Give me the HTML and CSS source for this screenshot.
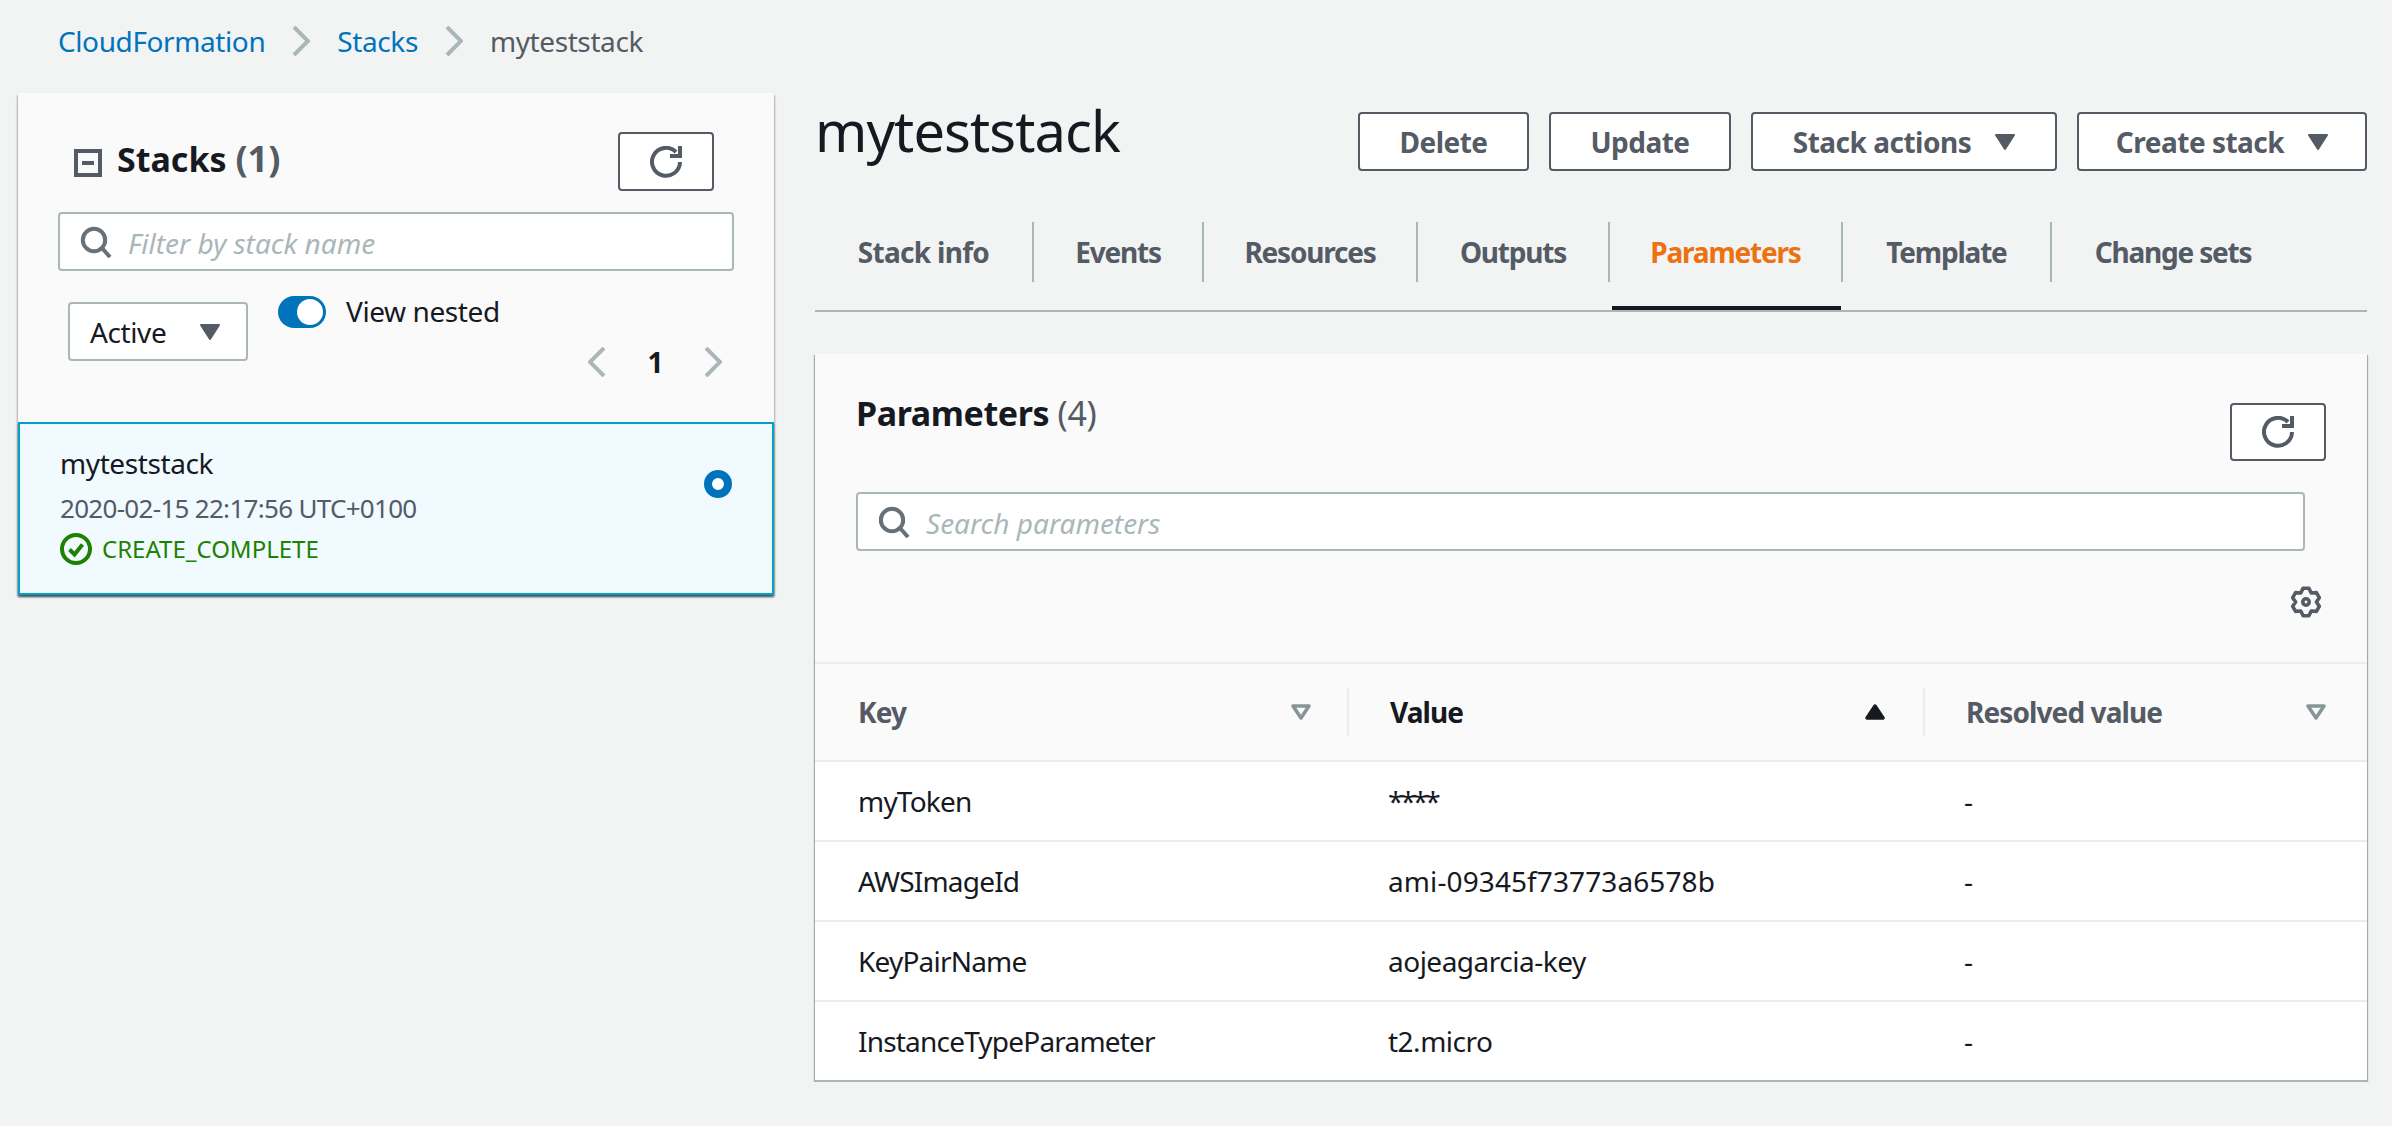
FILE: index.html
```html
<!DOCTYPE html>
<html lang="en">
<head>
  <meta charset="UTF-8" />
  <meta name="viewport" content="width=device-width, initial-scale=1" />
  <title>CloudFormation - Stacks</title>
  <link rel="stylesheet" href="styles.css">
</head>
<body>
  <nav class="breadcrumb">
    <a href="#">CloudFormation</a>
    <svg class="chevron" viewBox="0 0 18 30"><path d="M2 1l14 14L2 29"/></svg>
    <a href="#">Stacks</a>
    <svg class="chevron" viewBox="0 0 18 30"><path d="M2 1l14 14L2 29"/></svg>
    <span>myteststack</span>
  </nav>

  <div class="layout">
    <aside class="sidebar">
      <div class="sidebar-head">
        <div class="sidebar-title-row">
          <svg class="collapse-icon" viewBox="0 0 28 28"><rect x="2" y="2" width="24" height="24"/><path d="M8 14h12"/></svg>
          <h2 class="sidebar-title">Stacks <span class="count">(1)</span></h2>
          <button class="btn btn-icon sidebar-refresh">
            <svg class="icon" viewBox="0 0 16 16"><path d="M10 5h5V0"/><path d="M15 8a7 7 0 1 1-2-5"/></svg>
          </button>
        </div>

        <div class="search">
          <svg class="search-icon" viewBox="0 0 16 16"><circle cx="7" cy="7" r="5.6"/><path d="M11 11l4 4.5"/></svg>
          <span class="placeholder">Filter by stack name</span>
        </div>

        <div class="controls">
          <div class="select">
            <span>Active</span>
            <svg class="caret" viewBox="0 0 20 16"><path d="M1 1h18L10 15z"/></svg>
          </div>
          <div class="controls-right">
            <div class="toggle-row">
              <span class="toggle"></span>
              <span class="toggle-label">View nested</span>
            </div>
            <div class="pager">
              <svg class="chevron" viewBox="0 0 18 30"><path d="M16 1L2 15l14 14"/></svg>
              <strong>1</strong>
              <svg class="chevron" viewBox="0 0 18 30"><path d="M2 1l14 14L2 29"/></svg>
            </div>
          </div>
        </div>
      </div>

      <div class="stack-item">
        <div>
          <div class="stack-name">myteststack</div>
          <div class="stack-date">2020-02-15 22:17:56 UTC+0100</div>
          <div class="stack-status">
            <svg class="status-icon" viewBox="0 0 32 32"><circle cx="16" cy="16" r="14"/><path d="M9.5 16.5l5 5 8-10"/></svg>
            CREATE_COMPLETE
          </div>
        </div>
        <span class="radio"></span>
      </div>
    </aside>

    <main class="main">
      <div class="page-head">
        <h1>myteststack</h1>
        <div class="actions">
          <button class="btn btn-delete">Delete</button>
          <button class="btn btn-update">Update</button>
          <button class="btn btn-stack-actions">Stack actions <svg class="caret" viewBox="0 0 20 16"><path d="M1 1h18L10 15z"/></svg></button>
          <button class="btn btn-create">Create stack <svg class="caret" viewBox="0 0 20 16"><path d="M1 1h18L10 15z"/></svg></button>
        </div>
      </div>

      <div class="tabs">
        <a class="tab" href="#">Stack info</a>
        <a class="tab" href="#">Events</a>
        <a class="tab" href="#">Resources</a>
        <a class="tab" href="#">Outputs</a>
        <a class="tab active" href="#">Parameters</a>
        <a class="tab" href="#">Template</a>
        <a class="tab last" href="#">Change sets</a>
      </div>

      <section class="panel">
        <div class="panel-head">
          <div class="panel-title-row">
            <h2 class="panel-title">Parameters <span class="count">(4)</span></h2>
            <button class="btn btn-icon panel-refresh">
              <svg class="icon" viewBox="0 0 16 16"><path d="M10 5h5V0"/><path d="M15 8a7 7 0 1 1-2-5"/></svg>
            </button>
          </div>
          <div class="search panel-search">
            <svg class="search-icon" viewBox="0 0 16 16"><circle cx="7" cy="7" r="5.6"/><path d="M11 11l4 4.5"/></svg>
            <span class="placeholder">Search parameters</span>
          </div>
          <div class="gear-row">
            <svg class="gear" viewBox="0 0 16 16">
              <path d="M6.54 1.15h2.92L10.6 3.5l2.6-.18 1.46 2.52L13.2 8l1.46 2.16-1.46 2.52-2.6-.18-1.14 2.35H6.54L5.4 12.5l-2.6.18-1.46-2.52L2.8 8 1.34 5.84 2.8 3.32l2.6.18z"/>
              <circle cx="8" cy="8" r="1.6"/>
            </svg>
          </div>
        </div>

        <table class="params">
          <thead>
            <tr>
              <th class="col-key"><div class="th-inner">Key <svg class="sort" viewBox="0 0 20 16"><path d="M2 2h16l-8 12z"/></svg></div></th>
              <th class="col-value sorted"><div class="th-inner">Value <svg class="sort sort-active" viewBox="0 0 20 16"><path d="M10 2l8 12H2z"/></svg></div></th>
              <th class="col-resolved"><div class="th-inner">Resolved value <svg class="sort" viewBox="0 0 20 16"><path d="M2 2h16l-8 12z"/></svg></div></th>
            </tr>
          </thead>
          <tbody>
            <tr><td>myToken</td><td class="mask">****</td><td>-</td></tr>
            <tr><td>AWSImageId</td><td class="ami">ami-09345f73773a6578b</td><td>-</td></tr>
            <tr><td>KeyPairName</td><td>aojeagarcia-key</td><td>-</td></tr>
            <tr><td>InstanceTypeParameter</td><td>t2.micro</td><td>-</td></tr>
          </tbody>
        </table>
      </section>
    </main>
  </div>
</body>
</html>
```

FILE: styles.css
```css
* {
  box-sizing: border-box;
}

body {
  margin: 0;
  background: #f2f3f3;
  color: #16191f;
  font-family: "Noto Sans", "Open Sans", sans-serif;
  font-size: 28px;
  letter-spacing: -.4px;
  overflow: hidden;
}

a {
  color: inherit;
  text-decoration: none;
}

h1, h2 {
  margin: 0;
}

svg {
  flex: none;
  display: block;
}

.breadcrumb {
  height: 93px;
  padding: 0 0 12px 58px;
  display: flex;
  align-items: center;
  gap: 27px;
  color: #545b64;
}

.breadcrumb a {
  color: #0073bb;
}

.chevron {
  width: 18px;
  height: 30px;
  fill: none;
  stroke: #aab7b8;
  stroke-width: 4;
}

.layout {
  display: flex;
  padding: 0 18px;
  gap: 41px;
}

.sidebar {
  width: 756px;
  align-self: flex-start;
  background: #fafafa;
  box-shadow: 0 2px 2px 0 rgba(0, 28, 36, .3), 2px 2px 2px -1px rgba(0, 28, 36, .2), -2px 2px 2px -1px rgba(0, 28, 36, .2);
}

.sidebar-head {
  height: 329px;
  padding: 39px 40px 0 40px;
}

.sidebar-title-row {
  display: flex;
  align-items: center;
  height: 59px;
  padding-left: 16px;
}

.collapse-icon {
  width: 28px;
  height: 28px;
  margin: 3px 15px 0 0;
  fill: none;
  stroke: #545b64;
  stroke-width: 4;
}

.sidebar-title {
  font-size: 34px;
  line-height: 42px;
  margin-top: -6px;
  font-weight: 700;
  letter-spacing: 0;
}

.count {
  color: #545b64;
  font-weight: 400;
}

.sidebar-title .count {
  font-weight: 700;
  font-size: 36px;
}

.btn {
  height: 59px;
  background: #fff;
  border: 2px solid #545b64;
  border-radius: 4px;
  color: #545b64;
  font-family: inherit;
  font-size: 28px;
  font-weight: 700;
  letter-spacing: -.5px;
  padding: 0;
  display: flex;
  align-items: center;
  justify-content: center;
}

.btn-icon {
  width: 96px;
}

.sidebar-refresh {
  margin: 0 20px 0 auto;
}

.icon {
  width: 32px;
  height: 32px;
  fill: none;
  stroke: #545b64;
  stroke-width: 2;
}

.search {
  height: 59px;
  margin-top: 21px;
  background: #fff;
  border: 2px solid #aab7b8;
  border-radius: 4px;
  display: flex;
  align-items: center;
  padding-left: 20px;
}

.search-icon {
  width: 32px;
  height: 32px;
  margin-right: 16px;
  fill: none;
  stroke: #687078;
  stroke-width: 2;
}

.placeholder {
  padding-top: 2px;
  color: #aab7b8;
  font-style: italic;
  letter-spacing: 0;
}

.controls {
  display: flex;
  margin-top: 25px;
  padding-left: 10px;
  gap: 30px;
}

.select {
  width: 180px;
  height: 59px;
  margin-top: 6px;
  background: #fff;
  border: 2px solid #aab7b8;
  border-radius: 4px;
  display: flex;
  align-items: center;
  justify-content: space-between;
  padding: 0 26px 0 20px;
}

.caret {
  width: 20px;
  height: 16px;
  fill: #545b64;
  stroke: #545b64;
  stroke-width: 2;
  stroke-linejoin: round;
}

.controls-right {
  flex: 1;
}

.toggle-row {
  display: flex;
  align-items: center;
  gap: 20px;
  height: 32px;
}

.toggle-label {
  padding-bottom: 2px;
}

.toggle {
  width: 48px;
  height: 32px;
  border-radius: 16px;
  background: #0073bb;
  position: relative;
}

.toggle::after {
  content: "";
  position: absolute;
  right: 3px;
  top: 3px;
  width: 26px;
  height: 26px;
  border-radius: 50%;
  background: #fff;
}

.pager {
  display: flex;
  justify-content: flex-end;
  align-items: center;
  height: 32px;
  margin-top: 18px;
  padding-right: 12px;
  gap: 41px;
}

.pager strong {
  font-weight: 700;
}

.stack-item {
  height: 173px;
  background: #f1faff;
  border: 2px solid #00a1c9;
  padding: 19px 40px 0 40px;
  display: flex;
  justify-content: space-between;
  box-shadow: 0 2px 2px 0 rgba(0, 28, 36, .5);
}

.stack-name {
  line-height: 40px;
}

.stack-date {
  margin-top: 7px;
  font-size: 26px;
  line-height: 36px;
  letter-spacing: -.7px;
  color: #545b64;
}

.stack-status {
  margin-top: 6px;
  display: flex;
  align-items: center;
  gap: 10px;
  font-size: 24px;
  letter-spacing: 0;
  color: #1d8102;
}

.status-icon {
  width: 32px;
  height: 32px;
  fill: none;
  stroke: #1d8102;
  stroke-width: 4;
}

.radio {
  width: 28px;
  height: 28px;
  margin-top: 27px;
  border: 8px solid #0073bb;
  border-radius: 50%;
  background: #fff;
}

.main {
  width: 1552px;
}

.page-head {
  display: flex;
  justify-content: space-between;
}

.page-head h1 {
  font-size: 56px;
  font-weight: 400;
  line-height: 70px;
  letter-spacing: -.9px;
  margin-top: 2px;
}

.actions {
  display: flex;
  gap: 20px;
  margin-top: 19px;
}

.btn-delete {
  width: 171px;
}

.btn-update {
  width: 182px;
}

.btn-stack-actions {
  width: 306px;
  gap: 24px;
}

.btn-create {
  width: 290px;
  gap: 24px;
}

.tabs {
  display: flex;
  height: 90px;
  margin-top: 51px;
  border-bottom: 2px solid #aab7b8;
}

.tab {
  position: relative;
  height: 60px;
  display: flex;
  align-items: center;
  justify-content: center;
  border-right: 2px solid #aab7b8;
  color: #545b64;
  font-weight: 700;
  letter-spacing: -1.2px;
  white-space: nowrap;
}

.tab:nth-child(1) { width: 219px; letter-spacing: -.7px; }
.tab:nth-child(2) { width: 170px; }
.tab:nth-child(3) { width: 214px; }
.tab:nth-child(4) { width: 192px; }
.tab:nth-child(5) { width: 233px; }
.tab:nth-child(6) { width: 209px; }
.tab:nth-child(7) { width: 242px; }

.tab.last {
  border-right: none;
}

.tab.active {
  color: #ec7211;
}

.tab.active::after {
  content: "";
  position: absolute;
  left: 2px;
  right: 0;
  top: 84px;
  height: 4px;
  background: #16191f;
}

.panel {
  margin-top: 42px;
  background: #fff;
  box-shadow: 0 3px 2px -1px rgba(0, 28, 36, .6), 1px 1px 1px 0 rgba(0, 28, 36, .3), -1px 1px 1px 0 rgba(0, 28, 36, .3);
}

.panel-head {
  background: #fafafa;
  height: 308px;
  padding: 41px 0 0 41px;
}

.panel-title-row {
  display: flex;
  justify-content: space-between;
  padding-right: 41px;
}

.panel-title {
  font-size: 34px;
  line-height: 36px;
  font-weight: 700;
}

.panel-refresh {
  width: 96px;
  height: 58px;
  margin-top: 8px;
}

.panel-search {
  margin: 31px 62px 0 0;
}

.gear-row {
  display: flex;
  justify-content: flex-end;
  padding-right: 45px;
  margin-top: 35px;
}

.gear {
  width: 32px;
  height: 32px;
  fill: none;
  stroke: #545b64;
  stroke-width: 1.8;
  stroke-linejoin: round;
}

.params {
  width: 100%;
  border-collapse: collapse;
  table-layout: fixed;
}

.params th {
  height: 98px;
  padding: 0;
  background: #fafafa;
  border-top: 2px solid #eaeded;
  border-bottom: 2px solid #eaeded;
  color: #545b64;
  text-align: left;
  letter-spacing: -.9px;
}

.col-key {
  width: 534px;
}

.col-value {
  width: 576px;
}

.th-inner {
  height: 48px;
  display: flex;
  align-items: center;
  justify-content: space-between;
  padding: 0 36px 0 43px;
  border-right: 2px solid #eaeded;
}

.col-value .th-inner {
  padding: 0 38px 0 41px;
}

.col-resolved .th-inner {
  padding: 0 41px 0 41px;
  border-right: none;
}

.params th.sorted {
  color: #16191f;
}

.sort {
  width: 20px;
  height: 16px;
  fill: none;
  stroke: #879596;
  stroke-width: 3.5;
  stroke-linejoin: round;
}

.sort-active {
  fill: #16191f;
  stroke: #16191f;
}

.params td {
  height: 80px;
  padding: 0 0 0 39px;
  border-bottom: 2px solid #eaeded;
  letter-spacing: -.5px;
}

.params td:first-child {
  padding-left: 43px;
  letter-spacing: -.8px;
}

.params td.ami {
  letter-spacing: .1px;
}

.params td.mask {
  letter-spacing: -3px;
}

.params tr:last-child td {
  border-bottom: 2px solid #aab7b8;
}
```
